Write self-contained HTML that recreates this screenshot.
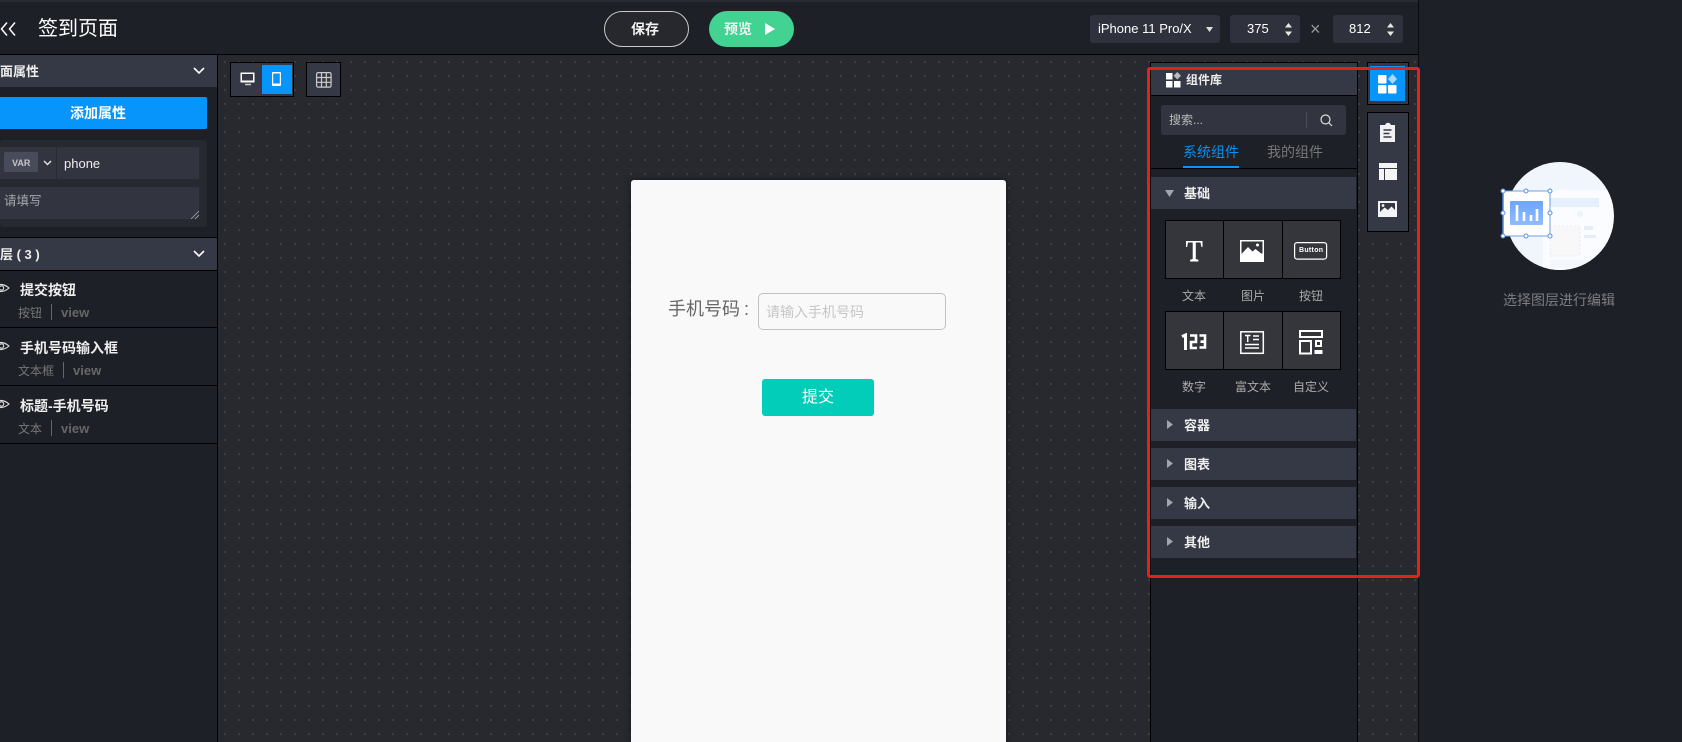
<!DOCTYPE html>
<html lang="zh"><head><meta charset="utf-8"><title>签到页面</title>
<style>
html,body{margin:0;padding:0;width:1682px;height:742px;overflow:hidden;background:#1e2027}
body{position:relative;font-family:"Liberation Sans","Noto Sans CJK SC",sans-serif;color:#fff}
.a{position:absolute;box-sizing:border-box}
.t{position:absolute;white-space:nowrap;line-height:20px;height:20px}
.hd{position:absolute;background:#353945}
svg{position:absolute;overflow:visible}
</style></head><body>

<!-- top bar -->
<div class="a" style="left:0;top:0;width:1682px;height:55px;background:#1e2027;border-bottom:1px solid #000"></div>
<div class="a" style="left:0;top:0;width:1682px;height:2px;background:#282b32"></div>
<svg style="left:0;top:21px" width="18" height="16" fill="none" stroke="#fff" stroke-width="1.500"><path d="M7 1.500 1.500 8 7 14.500M15 1.500 9.500 8l5.500 6.500"/></svg>
<div class="t" style="left:38px;top:18px;font-size:20px;line-height:22px;height:22px">签到页面</div>

<div class="a" style="left:604px;top:11px;width:85px;height:36px;border:1px solid #c8c8c8;border-radius:18px;background:#26282e"></div>
<div class="t" style="left:631px;top:19px;font-size:14px;font-weight:bold;color:#f2f2f2">保存</div>
<div class="a" style="left:709px;top:11px;width:85px;height:36px;border-radius:18px;background:#42d392"></div>
<div class="t" style="left:724px;top:19px;font-size:14px;font-weight:bold;color:#f2f2f2">预览</div>
<svg style="left:764px;top:22px" width="12" height="14"><path d="M1 1 11 7 1 13Z" fill="#fff"/></svg>

<div class="a" style="left:1090px;top:15px;width:130px;height:28px;background:#2f323c;border-radius:3px"></div>
<div class="t" style="left:1098px;top:19px;font-size:13px">iPhone 11 Pro/X</div>
<svg style="left:1206px;top:27px" width="7" height="5"><path d="M0 0h7L3.500 5Z" fill="#ddd"/></svg>
<div class="a" style="left:1230px;top:15px;width:70px;height:28px;background:#2f323c;border-radius:3px"></div>
<div class="t" style="left:1247px;top:19px;font-size:13px">375</div>
<svg style="left:1285px;top:23px" width="8" height="13" fill="#e8e8e8"><path d="M3.500 0 7 4.500H0ZM3.500 13 0 8.500h7Z"/></svg>
<div class="t" style="left:1310px;top:19px;font-size:18px;color:#999">×</div>
<div class="a" style="left:1333px;top:15px;width:70px;height:28px;background:#2f323c;border-radius:3px"></div>
<div class="t" style="left:1349px;top:19px;font-size:13px">812</div>
<svg style="left:1387px;top:23px" width="8" height="13" fill="#e8e8e8"><path d="M3.500 0 7 4.500H0ZM3.500 13 0 8.500h7Z"/></svg>

<!-- canvas -->
<div class="a" style="left:218px;top:55px;width:1200px;height:687px;background-color:#27292f;background-image:radial-gradient(circle at 7px 7px,#3d4046 0,#3d4046 1px,transparent 1.200px);background-size:14px 14px"></div>

<!-- left panel -->
<div class="a" style="left:0;top:55px;width:218px;height:687px;background:#1e2027;border-right:1px solid #000"></div>
<div class="hd" style="left:0;top:55px;width:217px;height:32px"></div>
<div class="t" style="left:-13px;top:62px;font-size:13px;font-weight:bold;color:#eee">页面属性</div>
<svg style="left:193px;top:67px" width="12" height="8" fill="none" stroke="#fff" stroke-width="1.600"><path d="M1 1l5 5 5-5"/></svg>
<div class="a" style="left:0;top:97px;width:207px;height:32px;background:#0895fb;border-radius:0 2px 2px 0"></div>
<div class="t" style="left:70px;top:103px;font-size:14px;font-weight:bold">添加属性</div>
<div class="a" style="left:0;top:140px;width:207px;height:87px;background:#262930;border-radius:3px"></div>
<div class="a" style="left:57px;top:147px;width:142px;height:32px;background:#32353f"></div>
<div class="a" style="left:0;top:147px;width:56px;height:32px;background:#32353f"></div>
<div class="a" style="left:4px;top:152px;width:34px;height:20px;background:#474b5a;border-radius:2px"></div>
<div class="t" style="left:12px;top:153px;font-size:9px;font-weight:bold;color:#c4c6cc">VAR</div>
<svg style="left:43px;top:160px" width="9" height="6" fill="none" stroke="#ddd" stroke-width="1.500"><path d="M1 1l3.500 3.500L8 1"/></svg>
<div class="t" style="left:64px;top:154px;font-size:13px;color:#eee">phone</div>
<div class="a" style="left:0;top:187px;width:199px;height:32px;background:#32353f"></div>
<div class="t" style="left:4px;top:191px;font-size:12.500px;color:#a5a7ad">请填写</div>
<svg style="left:191px;top:211px" width="8" height="8" stroke="#aaa" stroke-width="0.800"><path d="M0 8 8 0M4 8l4-4"/></svg>
<div class="a" style="left:0;top:237px;width:217px;height:1px;background:#000"></div>
<div class="hd" style="left:0;top:238px;width:217px;height:32px"></div>
<div class="t" style="left:-13px;top:245px;font-size:13px;font-weight:bold;color:#eee">图层 ( 3 )</div>
<svg style="left:193px;top:250px" width="12" height="8" fill="none" stroke="#fff" stroke-width="1.600"><path d="M1 1l5 5 5-5"/></svg>
<div class="a" style="left:0;top:270px;width:217px;height:1px;background:#000"></div>

<svg style="left:0;top:283px" width="10" height="10" fill="none" stroke="#ddd" stroke-width="1.100"><path d="M-7 5Q1-2 9 5Q1 12-7 5Z"/><circle cx="1.500" cy="5" r="2.200"/></svg>
<div class="t" style="left:20px;top:280px;font-size:14px;font-weight:bold;color:#eee">提交按钮</div>
<div class="t" style="left:18px;top:303px;font-size:12px;color:#777">按钮</div>
<div class="a" style="left:51px;top:304px;width:1px;height:16px;background:#666"></div>
<div class="t" style="left:61px;top:303px;font-size:13px;font-weight:bold;color:#666">view</div>
<div class="a" style="left:0;top:327px;width:217px;height:1px;background:#000"></div>

<svg style="left:0;top:341px" width="10" height="10" fill="none" stroke="#ddd" stroke-width="1.100"><path d="M-7 5Q1-2 9 5Q1 12-7 5Z"/><circle cx="1.500" cy="5" r="2.200"/></svg>
<div class="t" style="left:20px;top:338px;font-size:14px;font-weight:bold;color:#eee">手机号码输入框</div>
<div class="t" style="left:18px;top:361px;font-size:12px;color:#777">文本框</div>
<div class="a" style="left:63px;top:362px;width:1px;height:16px;background:#666"></div>
<div class="t" style="left:73px;top:361px;font-size:13px;font-weight:bold;color:#666">view</div>
<div class="a" style="left:0;top:385px;width:217px;height:1px;background:#000"></div>

<svg style="left:0;top:399px" width="10" height="10" fill="none" stroke="#ddd" stroke-width="1.100"><path d="M-7 5Q1-2 9 5Q1 12-7 5Z"/><circle cx="1.500" cy="5" r="2.200"/></svg>
<div class="t" style="left:20px;top:396px;font-size:14px;font-weight:bold;color:#eee">标题-手机号码</div>
<div class="t" style="left:18px;top:419px;font-size:12px;color:#777">文本</div>
<div class="a" style="left:51px;top:420px;width:1px;height:16px;background:#666"></div>
<div class="t" style="left:61px;top:419px;font-size:13px;font-weight:bold;color:#666">view</div>
<div class="a" style="left:0;top:443px;width:217px;height:1px;background:#000"></div>

<!-- canvas toolbars -->
<div class="a" style="left:230px;top:62px;width:64px;height:35px;background:#353945;border:1px solid #000"></div>
<div class="a" style="left:262px;top:65px;width:30px;height:29px;background:#0895fb"></div>
<svg style="left:240px;top:72px" width="16" height="14"><path d="M1 1h13v9H1Z" fill="#fff" stroke="#fff"/><path d="M2 2h11v6.500H2Z" fill="#353945"/><path d="M5 12.500h6" stroke="#ccc" stroke-width="1.500"/></svg>
<svg style="left:271px;top:71px" width="12" height="16" fill="none"><rect x="1" y="1" width="9" height="14" rx="1" fill="#fff"/><rect x="2.200" y="2.500" width="6.600" height="10" fill="#0895fb"/></svg>
<div class="a" style="left:306px;top:62px;width:35px;height:35px;background:#353945;border:1px solid #000"></div>
<svg style="left:316px;top:72px" width="16" height="16" fill="none" stroke="#ccc" stroke-width="1.200"><rect x=".6" y=".6" width="14.500" height="14.500" rx="1.500"/><path d="M5.500.6v14.500M10.300.6v14.500M.6 5.500h14.500M.6 10.300h14.500"/></svg>

<!-- phone -->
<div class="a" style="left:631px;top:180px;width:375px;height:562px;background:#f9f9f9;border-radius:3px 3px 0 0;box-shadow:0 0 6px #15171b"></div>
<div class="t" style="left:668px;top:298px;font-size:18px;line-height:22px;height:22px;color:#666">手机号码<span style="margin-left:4px">:</span></div>
<div class="a" style="left:758px;top:293px;width:188px;height:37px;border:1px solid #c0c0c0;border-radius:5px"></div>
<div class="t" style="left:766px;top:302px;font-size:14px;color:#c6c6c6">请输入手机号码</div>
<div class="a" style="left:762px;top:379px;width:112px;height:37px;background:#02cdb9;border-radius:3px"></div>
<div class="t" style="left:802px;top:388px;font-size:16px;color:#fff">提交</div>

<!-- components panel -->
<div class="a" style="left:1150px;top:62px;width:208px;height:680px;background:#1e2027;border-left:1px solid #000;border-right:1px solid #000;border-top:1px solid #000"></div>
<div class="hd" style="left:1151px;top:63px;width:206px;height:33px;border-bottom:1px solid #000;box-sizing:border-box"></div>
<svg style="left:1165.500px;top:72px" width="16" height="16" fill="#fff"><rect x="0" y="1" width="6.500" height="6.500"/><rect x="0" y="9" width="6.500" height="6.500"/><rect x="8" y="9" width="6.500" height="6.500"/><path d="M11.300 0 15 3.800 11.300 7.500 7.600 3.800Z" fill="#bbb"/></svg>
<div class="t" style="left:1186px;top:70px;font-size:12px;font-weight:bold;color:#eee">组件库</div>
<div class="a" style="left:1161px;top:105px;width:185px;height:30px;background:#32353f;border-radius:3px"></div>
<div class="t" style="left:1169px;top:110px;font-size:12px;color:#bbb">搜索...</div>
<div class="a" style="left:1306px;top:112px;width:1px;height:16px;background:#4a4d57"></div>
<svg style="left:1320px;top:114px" width="13" height="13" fill="none" stroke="#ddd" stroke-width="1.200"><circle cx="5.500" cy="5.500" r="4.500"/><path d="M9 9l3 3"/></svg>
<div class="t" style="left:1183px;top:142px;font-size:14px;color:#0b8ff0">系统组件</div>
<div class="t" style="left:1267px;top:142px;font-size:14px;color:#777">我的组件</div>
<div class="a" style="left:1183px;top:166px;width:56px;height:2px;background:#0895fb"></div>
<div class="a" style="left:1151px;top:168px;width:206px;height:1px;background:#000"></div>

<div class="hd" style="left:1151px;top:177px;width:205px;height:32px"></div>
<svg style="left:1165px;top:190px" width="10" height="8"><path d="M0 0h9L4.500 7Z" fill="#a3a5ab"/></svg>
<div class="t" style="left:1184px;top:184px;font-size:13px;font-weight:bold;color:#eee">基础</div>

<!-- grid -->
<div class="a" style="left:1165px;top:220px;width:176px;height:59px;background:#34363c;border:1px solid #000"></div>
<div class="a" style="left:1223px;top:220px;width:1px;height:59px;background:#000"></div>
<div class="a" style="left:1282px;top:220px;width:1px;height:59px;background:#000"></div>
<div class="a" style="left:1165px;top:311px;width:176px;height:59px;background:#34363c;border:1px solid #000"></div>
<div class="a" style="left:1223px;top:311px;width:1px;height:59px;background:#000"></div>
<div class="a" style="left:1282px;top:311px;width:1px;height:59px;background:#000"></div>

<svg style="left:1186px;top:240px" width="17" height="22" fill="#fff"><path d="M0 1h16.500v6h-1.100l-.9-4.500H9.800V19l2.600.8v1.700H4.100v-1.700l2.600-.8V2.500H2l-.9 4.500H0Z"/></svg>
<svg style="left:1240px;top:240px" width="24" height="22"><rect width="24" height="22" fill="#fff"/><rect x="1.500" y="1.500" width="21" height="12" fill="#34363c"/><path d="M1.500 14 8 7l4.500 4.500L15.500 9l7 5.500v3h-21Z" fill="#fff"/><circle cx="17.500" cy="5" r="1.500" fill="#fff"/></svg>
<svg style="left:1294px;top:242px" width="34" height="18" fill="none"><rect x=".6" y=".6" width="32" height="16.500" rx="2.500" stroke="#fff" stroke-width="1.200"/></svg>
<div class="t" style="left:1299px;top:243px;font-size:7px;line-height:16px;height:16px;font-weight:bold;letter-spacing:.3px;color:#fff">Button</div>
<svg style="left:1182px;top:333px" width="25" height="17" fill="none" stroke="#fff" stroke-width="3"><path d="M0 3.500 3.500 2V17"/><path d="M8 2.500h6V9H9v6h6" stroke-width="2.600"/><path d="M17.500 2.500h5.500v12h-5.500M18.500 8.700h5" stroke-width="2.600"/></svg>
<svg style="left:1240px;top:331px" width="24" height="23" fill="none" stroke="#fff"><rect x=".8" y=".8" width="22.500" height="21.500" stroke-width="1.500"/><path d="M5 4.500h5.500M7.700 4.500V11M13 5h6M13 8.500h6M5 13.500h14M5 17h14" stroke-width="1.500"/></svg>
<svg style="left:1299px;top:330px" width="24" height="25"><g fill="none" stroke="#fff" stroke-width="2"><rect x="1" y="1" width="22" height="6"/><rect x="1" y="11" width="11" height="12.500"/><rect x="17" y="11" width="5" height="5"/></g><rect x="15.500" y="20" width="8" height="4" fill="#fff"/></svg>

<div class="t" style="left:1182px;top:286px;font-size:12px;color:#aaa">文本</div>
<div class="t" style="left:1241px;top:286px;font-size:12px;color:#aaa">图片</div>
<div class="t" style="left:1299px;top:286px;font-size:12px;color:#aaa">按钮</div>
<div class="t" style="left:1182px;top:377px;font-size:12px;color:#aaa">数字</div>
<div class="t" style="left:1235px;top:377px;font-size:12px;color:#aaa">富文本</div>
<div class="t" style="left:1293px;top:377px;font-size:12px;color:#aaa">自定义</div>

<div class="hd" style="left:1151px;top:409px;width:205px;height:32px"></div>
<svg style="left:1167px;top:420px" width="7" height="10"><path d="M0 0 6 4.500 0 9Z" fill="#a3a5ab"/></svg>
<div class="t" style="left:1184px;top:416px;font-size:13px;font-weight:bold;color:#eee">容器</div>
<div class="hd" style="left:1151px;top:448px;width:205px;height:32px"></div>
<svg style="left:1167px;top:459px" width="7" height="10"><path d="M0 0 6 4.500 0 9Z" fill="#a3a5ab"/></svg>
<div class="t" style="left:1184px;top:455px;font-size:13px;font-weight:bold;color:#eee">图表</div>
<div class="hd" style="left:1151px;top:487px;width:205px;height:32px"></div>
<svg style="left:1167px;top:498px" width="7" height="10"><path d="M0 0 6 4.500 0 9Z" fill="#a3a5ab"/></svg>
<div class="t" style="left:1184px;top:494px;font-size:13px;font-weight:bold;color:#eee">输入</div>
<div class="hd" style="left:1151px;top:526px;width:205px;height:32px"></div>
<svg style="left:1167px;top:537px" width="7" height="10"><path d="M0 0 6 4.500 0 9Z" fill="#a3a5ab"/></svg>
<div class="t" style="left:1184px;top:533px;font-size:13px;font-weight:bold;color:#eee">其他</div>

<!-- right toolbar -->
<div class="a" style="left:1367px;top:62px;width:42px;height:43px;background:#353945;border:1px solid #000"></div>
<div class="a" style="left:1370px;top:66px;width:35px;height:35px;background:#0895fb"></div>
<svg style="left:1378px;top:74px" width="20" height="20" fill="#fff"><rect x="0" y="1" width="8.500" height="8.500" rx="1"/><rect x="0" y="11" width="8.500" height="8.500" rx="1"/><rect x="10" y="11" width="8.500" height="8.500" rx="1"/><path d="M14.500 0 19 5l-4.500 5L10 5Z" fill="#a9d8fc"/></svg>
<div class="a" style="left:1367px;top:112px;width:42px;height:120px;background:#353945;border:1px solid #000"></div>
<svg style="left:1380px;top:122px" width="16" height="21"><path d="M0 3h5l1-1.500Q8 0 10 1.500L11 3h4v17H0Z" fill="#f2f2f2"/><path d="M3.500 8h8M3.500 11.500h6M3.500 15h8" stroke="#353945" stroke-width="1.500"/></svg>
<svg style="left:1379px;top:163px" width="18" height="17" fill="#f4f4f4"><rect width="18" height="5"/><rect y="6" width="5" height="11"/><rect x="6" y="6" width="12" height="11"/></svg>
<svg style="left:1378px;top:201px" width="19" height="16"><rect width="19" height="16" fill="#f4f4f4"/><path d="M2 11 6.500 6.500 10 9l3.500-3.500L17 9V2H2Z" fill="#353945"/><circle cx="5" cy="4.500" r="1.400" fill="#f4f4f4"/></svg>

<!-- right panel -->
<div class="a" style="left:1419px;top:0;width:263px;height:742px;background:#1e2027"></div>
<div class="a" style="left:1418px;top:0;width:1px;height:742px;background:#0a0b0d"></div>

<!-- illustration -->
<svg style="left:1500px;top:160px" width="120" height="115">
<defs><clipPath id="c"><circle cx="60" cy="56" r="54"/></clipPath><linearGradient id="g" x1="0" y1="0" x2="0" y2="1"><stop offset="0" stop-color="#6ea6fb"/><stop offset="1" stop-color="#8fbcfd"/></linearGradient></defs>
<circle cx="60" cy="56" r="54" fill="#f1f6fd"/>
<g clip-path="url(#c)">
<rect x="43" y="30" width="70" height="85" fill="#fbfcff"/>
<rect x="50" y="38" width="49" height="9" fill="#e6effc"/>
<circle cx="80" cy="54" r="3" fill="#edf3fb"/>
<rect x="50" y="66" width="30" height="30" fill="#f8f8f9" stroke="#eaecef" stroke-dasharray="2 2"/>
<rect x="84" y="66" width="9" height="4" fill="#e3edfb"/><rect x="84" y="75" width="12" height="3" fill="#e3edfb"/>
<rect x="50" y="100" width="50" height="8" fill="#f4f7fb"/>
</g>
<rect x="3" y="31" width="47" height="45" fill="#fff" stroke="#6f9fe8"/>
<path d="M3 31v45" stroke="#4d86e0" stroke-width="1.500"/>
<rect x="10" y="41" width="33" height="24" rx="1" fill="url(#g)"/>
<path d="M17 45v16M24 52v9M31 55v6M37 49v12" stroke="#fff" stroke-width="2.600"/>
<g fill="#fff" stroke="#5b90e4"><circle cx="3" cy="31" r="2"/><circle cx="26" cy="31" r="2"/><circle cx="50" cy="31" r="2"/><circle cx="3" cy="53" r="2"/><circle cx="50" cy="53" r="2"/><circle cx="3" cy="76" r="2"/><circle cx="26" cy="76" r="2"/><circle cx="50" cy="76" r="2"/></g>
</svg>
<div class="t" style="left:1503px;top:290px;font-size:14px;color:#7b7d82;width:112px;letter-spacing:0">选择图层进行编辑</div>

<!-- red annotation -->
<div class="a" style="left:1147px;top:67px;width:273px;height:511px;border:3px solid #e3231a;border-radius:3px"></div>

</body></html>
